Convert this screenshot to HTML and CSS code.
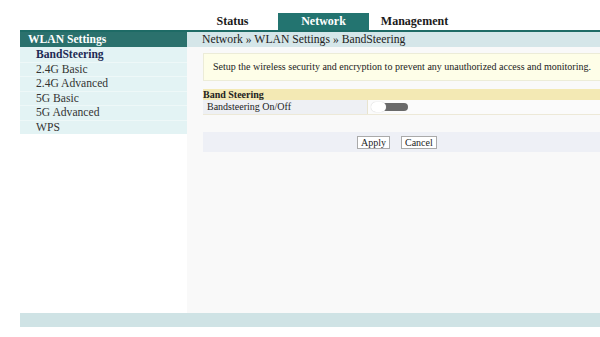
FILE: index.html
```html
<!DOCTYPE html>
<html>
<head>
<meta charset="utf-8">
<link rel="stylesheet" href="styles.css">
</head>
<body>
<div class="page">
  <div class="tabs">
    <div class="tab">Status</div>
    <div class="tab active">Network</div>
    <div class="tab">Management</div>
  </div>
  <div class="layout">
    <div class="sidebar">
      <div class="side-head">WLAN Settings</div>
      <div class="side-item current">BandSteering</div>
      <div class="side-item">2.4G Basic</div>
      <div class="side-item">2.4G Advanced</div>
      <div class="side-item">5G Basic</div>
      <div class="side-item">5G Advanced</div>
      <div class="side-item">WPS</div>
    </div>
    <div class="main">
      <div class="crumb">Network » WLAN Settings » BandSteering</div>
      <div class="content">
        <div class="info">Setup the wireless security and encryption to prevent any unauthorized access and monitoring.</div>
        <div class="sec-head">Band Steering</div>
        <div class="row">
          <div class="label">Bandsteering On/Off</div>
          <div class="value"><span class="toggle"><span class="knob"></span></span></div>
        </div>
        <div class="buttons">
          <button class="btn">Apply</button>
          <button class="btn">Cancel</button>
        </div>
      </div>
    </div>
  </div>
  <div class="footer"></div>
</div>
</body>
</html>
```
FILE: styles.css
```css
html, body { margin: 0; padding: 0; background: #ffffff; }
body { font-family: "Liberation Serif", "Times New Roman", serif; color: #222; }
.page { padding-left: 20px; width: 580px; }
.tabs { display: flex; padding-left: 167px; padding-top: 13px; height: 17px; border-bottom: 2px solid #1e6b66; }
.tab { width: 91px; font-size: 12px; font-weight: bold; text-align: center; line-height: 17px; color: #1a1a1a; }
.tab.active { background: #237470; color: #fff; }
.layout { display: flex; height: 281px; }
.sidebar { width: 167px; }
.side-head { background: #2b716d; color: #fff; font-weight: bold; font-size: 11.6px; height: 15px; line-height: 15px; padding-left: 8px; }
.side-item { background: #e3f3f4; height: 13.5px; line-height: 14px; font-size: 11.6px; padding-left: 16px; color: #333; border-top: 1px solid #eef8f8; }
.side-item.current { font-weight: bold; color: #1e2b55; border-top-color: #e3f3f4; }
.main { flex: 1; background: #f9f9f9; }
.crumb { background: #d5e6e9; height: 15px; line-height: 15px; font-size: 11.7px; padding-left: 15px; color: #222; }
.content { padding: 6px 0 0 16px; }
.info { background: #fefee8; border: 1px solid #ececd8; border-right: none; height: 26px; line-height: 26px; font-size: 10px; padding-left: 9px; color: #222; }
.sec-head { margin-top: 8px; background: #f3e9b4; height: 11px; line-height: 11px; font-size: 10px; font-weight: bold; color: #222; }
.row { display: flex; height: 14px; border-bottom: 1px solid #ede9d8; }
.label { width: 160px; background: #eef0f4; font-size: 10px; line-height: 14px; padding-left: 4px; border-right: 1px solid #e8e4d0; }
.value { flex: 1; background: #fbfbfb; display: flex; align-items: center; padding-left: 3px; }
.toggle { position: relative; display: block; width: 36px; height: 8px; background: #6a6a6a; border-radius: 5px; margin-left: 1px; }
.knob { position: absolute; left: -1px; top: -1px; width: 15px; height: 10px; border-radius: 6px; background: #fff; box-shadow: 0 0 1px #bbb; }
.buttons { margin-top: 17px; background: #eef0f6; height: 20px; display: flex; align-items: center; padding-left: 154px; gap: 11px; }
.btn { font-family: "Liberation Serif", serif; font-size: 10px; background: #fff; border: 1px solid #aaa; padding: 0 3px; height: 13px; line-height: 11px; color: #222; }
.footer { height: 14px; background: #cfe3e5; }
```
